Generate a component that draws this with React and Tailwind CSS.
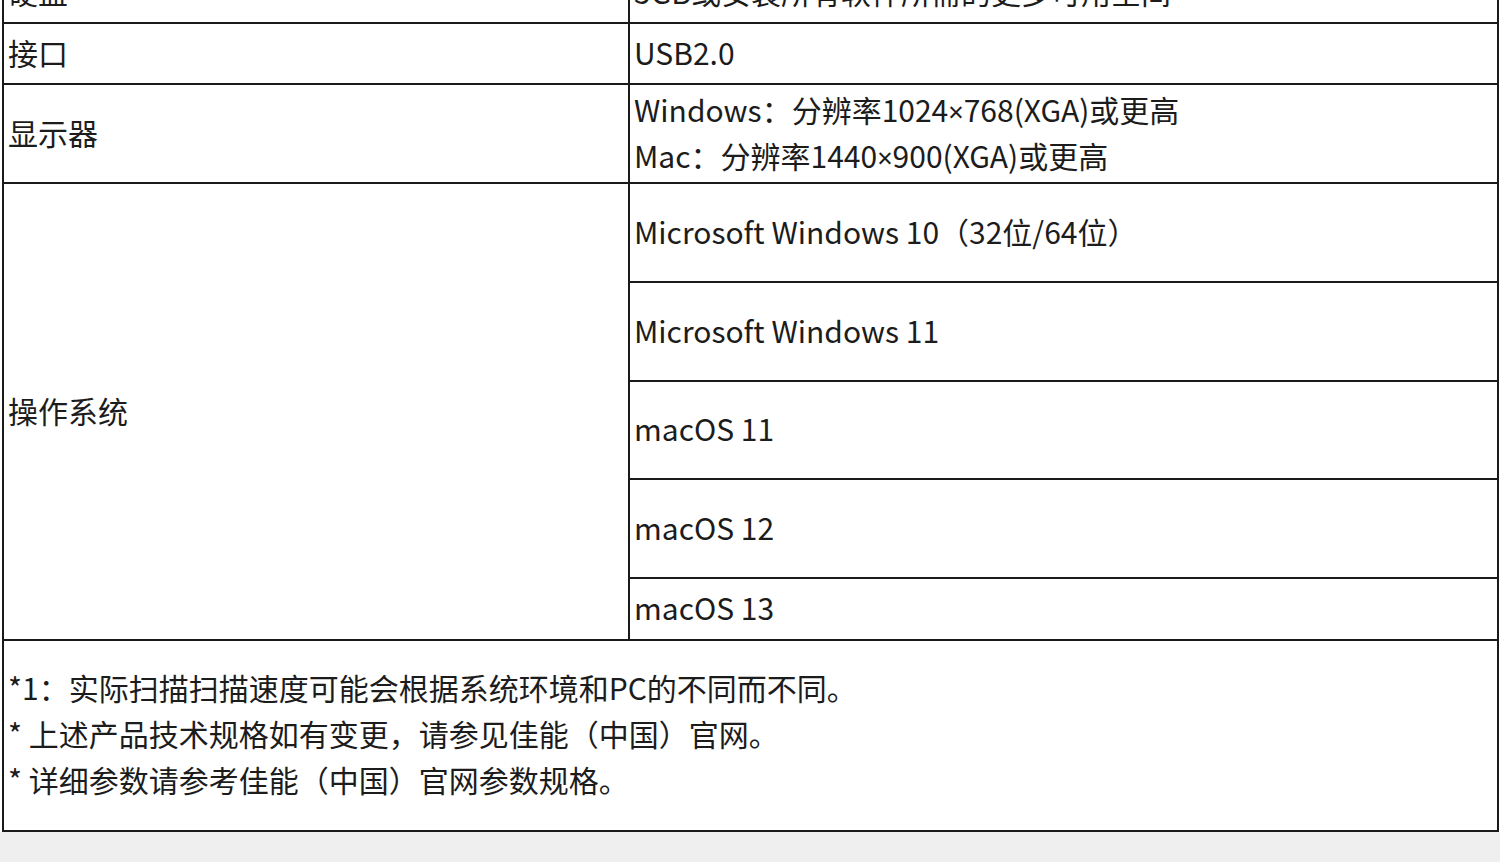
import React from 'react';

const osList = [
  { label: 'Microsoft Windows 10（32位/64位）', h: 'h-[99px]' },
  { label: 'Microsoft Windows 11', h: 'h-[99px]' },
  { label: 'macOS 11', h: 'h-[98px]' },
  { label: 'macOS 12', h: 'h-[99px]' },
  { label: 'macOS 13', h: 'h-[60px]', last: true },
];

const notes = [
  '*1：实际扫描扫描速度可能会根据系统环境和PC的不同而不同。',
  '* 上述产品技术规格如有变更，请参见佳能（中国）官网。',
  '* 详细参数请参考佳能（中国）官网参数规格。',
];

const Times = () => <span className="font-['Noto_Sans'] text-[27px] leading-none">×</span>;

const App = () => {
  return (
    <div
      className="h-[862px] overflow-hidden bg-[#efefef] text-[#1c1c1c] text-[30px] leading-[46px]"
      style={{ fontFamily: '"Noto Sans CJK SC", "Noto Sans", sans-serif' }}
    >
      <div className="bg-white -mt-[37px] pl-[2px] pr-px">
        <div className="border-x-2 border-b-2 border-[#1a1a1a]">
          {/* 硬盘 */}
          <div className="flex h-[61px] border-b-2 border-[#1a1a1a]">
            <div className="w-[626px] shrink-0 border-r-2 border-[#1a1a1a] pl-1 pb-1 flex items-center">硬盘</div>
            <div className="flex-1 pl-[4px] pb-1 flex items-center">5GB或安装所有软件所需的更多可用空间</div>
          </div>

          {/* 接口 */}
          <div className="flex h-[61px] border-b-2 border-[#1a1a1a]">
            <div className="w-[626px] shrink-0 border-r-2 border-[#1a1a1a] pl-1 pb-1 flex items-center">接口</div>
            <div className="flex-1 pl-[4px] pb-1 flex items-center">USB2.0</div>
          </div>

          {/* 显示器 */}
          <div className="flex h-[99px] border-b-2 border-[#1a1a1a]">
            <div className="w-[626px] shrink-0 border-r-2 border-[#1a1a1a] pl-1 pb-1 flex items-center">显示器</div>
            <div className="flex-1 pl-[4px] pb-1 flex flex-col justify-center">
              <div className="h-[46px]">Windows：分辨率1024<Times />768(XGA)或更高</div>
              <div className="h-[46px]">Mac：分辨率1440<Times />900(XGA)或更高</div>
            </div>
          </div>

          {/* 操作系统 */}
          <div className="flex border-b-2 border-[#1a1a1a]">
            <div className="w-[626px] shrink-0 border-r-2 border-[#1a1a1a] pl-1 pb-1 flex items-center">操作系统</div>
            <div className="flex-1 flex flex-col">
              {osList.map((os) => (
                <div
                  key={os.label}
                  className={`${os.h} pl-[4px] pb-1 flex items-center ${os.last ? '' : 'border-b-2 border-[#1a1a1a]'}`}
                >
                  {os.label}
                </div>
              ))}
            </div>
          </div>

          {/* 备注 */}
          <div className="h-[189px] pl-1 pb-[6px] flex flex-col justify-center">
            {notes.map((n) => (
              <div key={n}>{n}</div>
            ))}
          </div>
        </div>
      </div>
    </div>
  );
};

export default App;
